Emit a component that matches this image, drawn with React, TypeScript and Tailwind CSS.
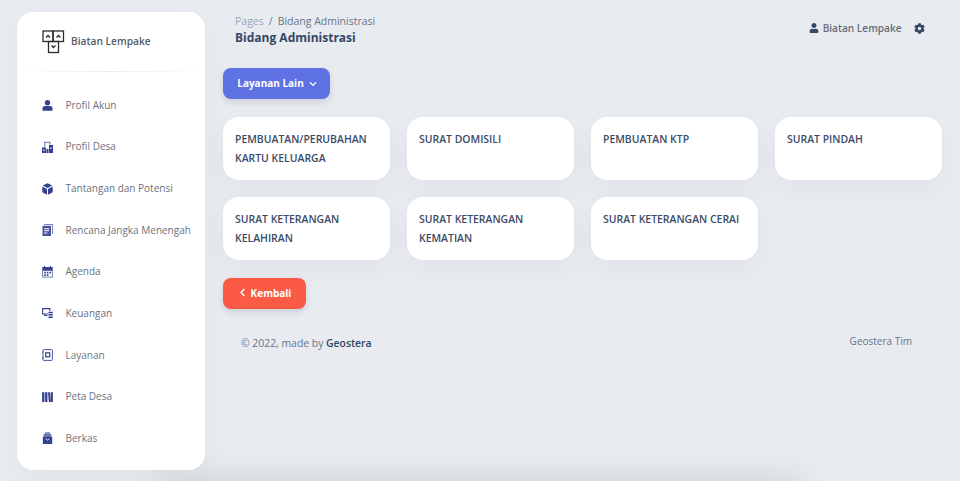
import { FaUser, FaCog, FaChevronLeft, FaChevronDown } from "react-icons/fa";

const ICON = "#344192";

function Logo() {
  return (
    <svg width="23" height="24" viewBox="0 0 23 24" fill="none" stroke="#2b2b2b" strokeWidth="1.3">
      <rect x="1" y="1" width="10" height="10.5" />
      <rect x="11" y="1" width="10.5" height="10.5" />
      <rect x="6.5" y="11.5" width="10" height="11" />
      <path d="M4 7.5l2-2 2 2M14.5 7.5l2-2 2 2M9.5 15.5l2 2 2-2" />
    </svg>
  );
}

function IconProfile() {
  return (
    <svg width="11" height="11" viewBox="0 0 11 11" fill={ICON}>
      <circle cx="5.5" cy="2.8" r="2.7" />
      <path d="M0.5 10.8V8.4C0.5 6.8 1.8 6 3 6h5c1.2 0 2.5 0.8 2.5 2.4v2.4z" />
    </svg>
  );
}

function IconDesa() {
  return (
    <svg width="11" height="12" viewBox="0 0 11 12" fill={ICON}>
      <rect x="0" y="6.5" width="4" height="5.5" />
      <rect x="7" y="4" width="4" height="8" />
      <rect x="4.5" y="8" width="2" height="4" />
      <path d="M2.2 6V0.8h6.2V3.5H7.4V1.8H3.2V6z" opacity="0.75" />
      <path d="M1.3 8.5h1.2v1.6H1.3zM8.4 6.5h1.2v1.6H8.4z" fill="#fff" />
    </svg>
  );
}

function IconBox() {
  return (
    <svg width="11" height="12" viewBox="0 0 11 12" fill={ICON}>
      <path d="M5.5 0.2L10.3 2.6 5.5 5 0.7 2.6z" />
      <path d="M0.3 3.6L5 5.9V11.8L0.3 9.2z" />
      <path d="M10.7 3.6L6 5.9V11.8L10.7 9.2z" />
    </svg>
  );
}

function IconDoc() {
  return (
    <svg width="11" height="12" viewBox="0 0 11 12" fill={ICON}>
      <path d="M2 0h9v10h-1V1H2z" opacity="0.65" />
      <path d="M0.5 1.8h8.5V12H0.5z" opacity="0.9" />
      <path d="M2.2 4.2h5v1h-5zM2.2 6.3h5v1h-5zM2.2 8.4h3v1h-3z" fill="#fff" />
    </svg>
  );
}

function IconCalendar() {
  return (
    <svg width="11" height="12" viewBox="0 0 11 12" fill={ICON}>
      <path d="M0.3 1h10.4v3.4H0.3z" />
      <path d="M2 0h1v1H2zM8 0h1v1H8z" />
      <path d="M0.3 4h10.4v7.6H0.3zM1.1 4.8v6h8.8v-6z" opacity="0.85" />
      <path d="M2.2 5.8h1.6v1.6H2.2zM4.8 5.8h1.6v1.6H4.8zM7.4 5.8H9v1.6H7.4zM2.2 8.3h1.6v1.6H2.2zM4.8 8.3h1.6v1.6H4.8z" />
    </svg>
  );
}

function IconMoney() {
  return (
    <svg width="11" height="11" viewBox="0 0 11 11" fill="none" stroke={ICON}>
      <path d="M6 6H0.6V0.6h7.2V3" strokeWidth="1.1" />
      <path d="M6.4 4.4h4.4M6.4 6.8h4.4M6.4 9.2h4.4" strokeWidth="1.5" />
      <path d="M2.5 6v1.6h3" strokeWidth="1" />
    </svg>
  );
}

function IconSafe() {
  return (
    <svg width="11" height="12" viewBox="0 0 11 12" fill="none" stroke={ICON} strokeWidth="0.9">
      <rect x="1" y="0.6" width="9.4" height="10.8" rx="0.8" />
      <rect x="3.7" y="3.8" width="4" height="4" strokeWidth="1.2" />
      <path d="M0 3h1.6M0 9h1.6" />
    </svg>
  );
}

function IconBooks() {
  return (
    <svg width="11" height="12" viewBox="0 0 11 12" fill={ICON}>
      <path d="M0.1 1.2h2.3v9.8H0.1z" />
      <path d="M3.1 1.2h2.3v9.8H3.1z" />
      <path d="M6 1.4l2-0.3 0.9 9.9-2 0.2z" />
      <path d="M8.8 1.2h2.1v9.8H8.8z" />
    </svg>
  );
}

function IconBag() {
  return (
    <svg width="11" height="12" viewBox="0 0 11 12" fill={ICON}>
      <path d="M2.8 0.2h5.4v2H2.8z" opacity="0.6" />
      <path d="M1.6 2h7.8v3H1.6z" opacity="0.7" />
      <path d="M0.8 4.8h9.4V12H0.8z" />
      <path d="M3.6 6.8l1.9 1.3 1.9-1.3" stroke="#fff" strokeWidth="0.8" fill="none" />
    </svg>
  );
}

const menu = [
  { label: "Profil Akun", icon: <IconProfile /> },
  { label: "Profil Desa", icon: <IconDesa /> },
  { label: "Tantangan dan Potensi", icon: <IconBox /> },
  { label: "Rencana Jangka Menengah", icon: <IconDoc /> },
  { label: "Agenda", icon: <IconCalendar /> },
  { label: "Keuangan", icon: <IconMoney /> },
  { label: "Layanan", icon: <IconSafe /> },
  { label: "Peta Desa", icon: <IconBooks /> },
  { label: "Berkas", icon: <IconBag /> },
];

const cards = [
  ["PEMBUATAN/PERUBAHAN", "KARTU KELUARGA"],
  ["SURAT DOMISILI"],
  ["PEMBUATAN KTP"],
  ["SURAT PINDAH"],
  ["SURAT KETERANGAN", "KELAHIRAN"],
  ["SURAT KETERANGAN", "KEMATIAN"],
  ["SURAT KETERANGAN CERAI"],
];

export default function App() {
  return (
    <div className="relative flex h-[481px] w-[960px] overflow-hidden bg-[#e8ebef] font-['Open_Sans',sans-serif]">
      {/* bayangan dari elemen di bawah layar */}
      <div className="absolute left-[170px] top-[490px] h-4 w-[620px] shadow-[0_0_30px_14px_rgba(0,0,0,0.09)]" />

      <aside className="relative ml-[17px] mt-3 h-[458px] w-[188px] shrink-0 rounded-2xl bg-white shadow-[0_10px_30px_rgba(0,0,0,0.04)]">
        <div className="flex h-[59px] items-center pl-[25px]">
          <Logo />
          <span className="ml-[6px] text-[10.2px] font-semibold text-[#555b66]">Biatan Lempake</span>
        </div>
        <div className="h-px bg-gradient-to-r from-transparent via-[#ececec] to-transparent" />
        <nav className="mt-[12.5px] flex flex-col">
          {menu.map((m) => (
            <div key={m.label} className="flex h-[41.65px] items-center pl-[25px]">
              <span className="flex w-[11px] justify-center">{m.icon}</span>
              <span className="ml-[12.5px] whitespace-nowrap text-[10px] text-[#6c7280]">{m.label}</span>
            </div>
          ))}
        </nav>
      </aside>

      <main className="ml-[18px] w-[719px] shrink-0">
        <header className="flex h-[56px] items-start justify-between pl-3 pr-[17.5px]">
          <div className="pt-[14px]">
            <div className="flex text-[10.5px] leading-[15px]">
              <span className="-mr-[1px] text-[#9aa4b5]">Pages</span>
              <span className="mx-[6px] text-[#67748e]">/</span>
              <span className="-ml-[1px] text-[#67748e]">Bidang Administrasi</span>
            </div>
            <div className="text-[12px] font-bold leading-[18px] text-[#344767]">Bidang Administrasi</div>
          </div>
          <div className="flex items-center pt-[21px]">
            <FaUser className="text-[10px] text-[#344767]" />
            <span className="ml-[4px] text-[10.1px] font-semibold leading-[14px] text-[#666e7a]">Biatan Lempake</span>
            <FaCog className="ml-[12px] text-[11px] text-[#344767]" />
          </div>
        </header>

        <button className="mt-3 flex h-[31px] w-[107px] items-center justify-center rounded-lg bg-[#5e72e4] pl-[1px] text-[10px] font-bold text-white shadow-[0_3px_6px_rgba(50,50,93,0.15)]">
          Layanan Lain
          <FaChevronDown className="ml-[5px] text-[8px]" />
        </button>

        <div className="mt-[18px] grid grid-cols-4 gap-x-[17px] gap-y-[17px]">
          {cards.map((c) => (
            <div key={c[0] + c.length + (c[1] ?? "")} className="h-[63px] rounded-2xl bg-white px-3 pt-[13px] text-[10.45px] font-semibold leading-[19px] text-[#3b4a68] shadow-[0_10px_30px_rgba(0,0,0,0.04)]">
              {c.map((line) => (
                <div key={line} className="whitespace-nowrap">{line}</div>
              ))}
            </div>
          ))}
        </div>

        <button className="mt-[18px] flex h-[31px] w-[83px] items-center justify-center rounded-lg bg-[#fb5a45] text-[10px] font-bold text-white shadow-[0_3px_6px_rgba(50,50,93,0.15)]">
          <FaChevronLeft className="mb-[3px] mr-[4px] text-[9px]" />
          Kembali
        </button>

        <footer className="mt-[24px] flex items-start justify-between pl-[18px] pr-[30px]">
          <div className="pt-[3px] text-[10.4px] leading-[15px] text-[#67748e]">
            © 2022, made by <span className="font-semibold text-[#344767]">Geostera</span>
          </div>
          <div className="pt-[1px] text-[10px] leading-[15px] text-[#67748e]">Geostera Tim</div>
        </footer>
      </main>
    </div>
  );
}
